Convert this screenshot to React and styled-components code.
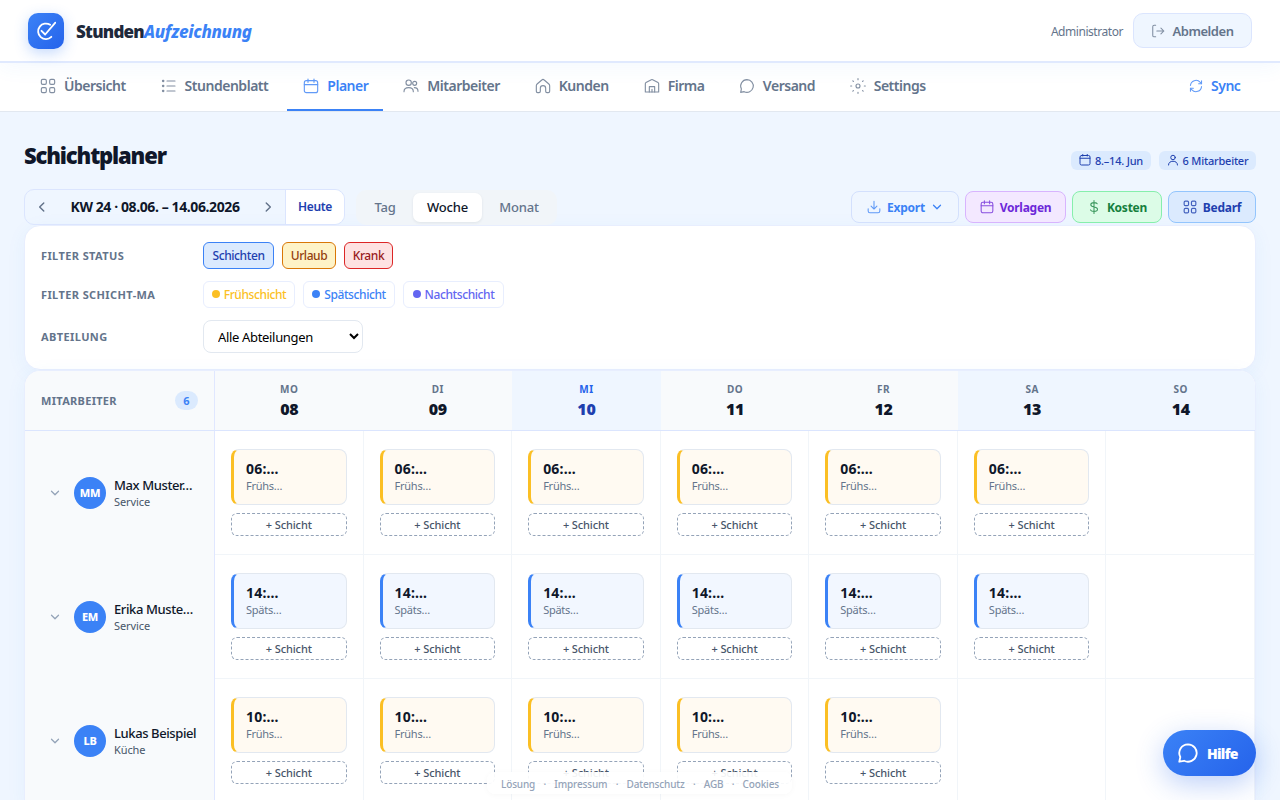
import styled, { createGlobalStyle, css } from 'styled-components';
import { useState } from 'react';

const days = [
  { name: 'MO', date: '08' },
  { name: 'DI', date: '09' },
  { name: 'MI', date: '10', tone: 'today' },
  { name: 'DO', date: '11' },
  { name: 'FR', date: '12' },
  { name: 'SA', date: '13', tone: 'weekend' },
  { name: 'SO', date: '14', tone: 'weekend' },
];

const employees = [
  { initials: 'MM', name: 'Max Muster…', dept: 'Service', time: '06:…', shift: 'Frühs…', type: 'early', count: 6 },
  { initials: 'EM', name: 'Erika Muste…', dept: 'Service', time: '14:…', shift: 'Späts…', type: 'late', count: 6 },
  { initials: 'LB', name: 'Lukas Beispiel', dept: 'Küche', time: '10:…', shift: 'Frühs…', type: 'early', count: 5 },
];

const shiftColors = {
  early: { line: '#fbbf24', bg: '#fffaf2' },
  late: { line: '#3b82f6', bg: '#f2f7ff' },
};

const icons = {
  grid: (
    <>
      <rect x="2" y="2" width="7.5" height="7.5" rx="2" />
      <rect x="14.5" y="2" width="7.5" height="7.5" rx="2" />
      <rect x="2" y="14.5" width="7.5" height="7.5" rx="2" />
      <rect x="14.5" y="14.5" width="7.5" height="7.5" rx="2" />
    </>
  ),
  list: (
    <>
      <path d="M9 4.5h12M9 12h12M9 19.5h12" />
      <path d="M3 4.5h.5M3 12h.5M3 19.5h.5" strokeWidth="3.4" />
    </>
  ),
  calendar: (
    <>
      <rect x="2" y="4" width="20" height="18" rx="3" />
      <path d="M2 10h20M7.5 1.5v5M16.5 1.5v5" />
    </>
  ),
  calendarPlain: (
    <>
      <rect x="2" y="3" width="20" height="19" rx="3" />
      <path d="M2 8.5h20M7.5 1v3M16.5 1v3" />
    </>
  ),
  users: (
    <>
      <circle cx="8.5" cy="7" r="4" />
      <circle cx="17.5" cy="8" r="3" />
      <path d="M1.5 20.5c0-4 3-6 7-6s7 2 7 6M17 14.5c3 0 5.5 2 5.5 5.5" />
    </>
  ),
  home: (
    <path d="M2 11.5c0-1 .4-1.8 1.2-2.5l7-6c1-.9 2.6-.9 3.6 0l7 6c.8.7 1.2 1.5 1.2 2.5V20a2 2 0 0 1-2 2h-2a2 2 0 0 1-2-2v-4.5a4 4 0 0 0-8 0V20a2 2 0 0 1-2 2H4a2 2 0 0 1-2-2z" />
  ),
  building: (
    <>
      <path d="M2 21V8.5c0-.8.4-1.4 1-1.7l8-4.3c.6-.3 1.4-.3 2 0l8 4.3c.6.3 1 .9 1 1.7V21z" />
      <path d="M8 21v-8h8v8M12 17v4" />
    </>
  ),
  chat: (
    <path d="M12 2.5a9.5 9.5 0 1 1-4.3 18L2.5 21.5l1.1-5.1A9.5 9.5 0 0 1 12 2.5z" />
  ),
  gear: (
    <>
      <circle cx="12" cy="12" r="3" />
      <path d="M12 1v1.5M12 21.5V23M1 12h1.5M21.5 12H23M4.2 4.2l1 1M18.8 18.8l1 1M4.2 19.8l1-1M18.8 5.2l1-1" />
    </>
  ),
  sync: (
    <>
      <path d="M2.5 11a9.5 9.5 0 0 1 16.5-5.5L21.5 8M21.5 13a9.5 9.5 0 0 1-16.5 5.5L2.5 16" />
      <path d="M21.5 3v5h-5M2.5 21v-5h5" />
    </>
  ),
  logout: (
    <>
      <path d="M8 22H5.5A2.5 2.5 0 0 1 3 19.5v-15A2.5 2.5 0 0 1 5.5 2H8" />
      <path d="M10 12H22M17 7l5 5-5 5" />
    </>
  ),
  user: (
    <>
      <circle cx="12" cy="7" r="4.5" />
      <path d="M3 22c0-5 4-7.5 9-7.5s9 2.5 9 7.5" />
    </>
  ),
  download: (
    <>
      <path d="M2 15v4a3 3 0 0 0 3 3h14a3 3 0 0 0 3-3v-4" />
      <path d="M12 2v13M7 10.5l5 5 5-5" />
    </>
  ),
  dollar: (
    <path d="M12 1v22M17.5 6.5C16.5 5 14.5 4.5 12 4.5c-3 0-5.5 1.2-5.5 3.7 0 5.3 11.5 2.3 11.5 7.5 0 2.6-2.7 3.8-6 3.8-2.8 0-5-.7-6-2.5" />
  ),
  down: <path d="M5 8.5l7 7 7-7" />,
  left: <path d="M15 5l-7 7 7 7" />,
  right: <path d="M9 5l7 7-7 7" />,
  logo: (
    <>
      <path d="M17 4.6A9.3 9.3 0 1 0 18.4 19" />
      <path d="M6.6 11.8l4.4 4.4L23.2 2" />
    </>
  ),
};

const Icon = ({ name, size = 16, stroke = 1.5, faded }) => (
  <Svg
    width={size}
    height={size}
    viewBox="0 0 24 24"
    strokeWidth={stroke}
    $faded={faded}
  >
    {icons[name]}
  </Svg>
);

const tabs = [
  { icon: 'grid', label: 'Übersicht', width: 60.6 },
  { icon: 'list', label: 'Stundenblatt', width: 82.7 },
  { icon: 'calendar', label: 'Planer', width: 40 },
  { icon: 'users', label: 'Mitarbeiter', width: 71.4 },
  { icon: 'home', label: 'Kunden', width: 49 },
  { icon: 'building', label: 'Firma', width: 35.2 },
  { icon: 'chat', label: 'Versand', width: 50.8 },
  { icon: 'gear', label: 'Settings', width: 52 },
];

const App = () => {
  const [activeTab, setActiveTab] = useState('Planer');
  const [view, setView] = useState('Woche');

  return (
    <Page>
      <GlobalStyle />
      <Header>
        <Brand>
          <Logo>
            <Icon name="logo" size={20} stroke={2.2} />
          </Logo>
          <BrandName>
            Stunden<em>Aufzeichnung</em>
          </BrandName>
        </Brand>
        <Account>
          <Role>Administrator</Role>
          <LogoutBtn>
            <Icon name="logout" size={14} stroke={1.8} faded />
            Abmelden
          </LogoutBtn>
        </Account>
      </Header>

      <Nav>
        {tabs.map((tab) => (
          <Tab
            key={tab.label}
            $active={tab.label === activeTab}
            onClick={() => setActiveTab(tab.label)}
          >
            <Icon name={tab.icon} stroke={1.7} faded />
            <TabLabel $width={tab.width}>{tab.label}</TabLabel>
          </Tab>
        ))}
        <SyncTab>
          <Icon name="sync" size={14} stroke={1.8} faded />
          <TabLabel $width={29}>Sync</TabLabel>
        </SyncTab>
      </Nav>

      <Main>
        <TitleRow>
          <Title>Schichtplaner</Title>
          <Badges>
            <Badge $width={80}>
              <Icon name="calendarPlain" size={12} stroke={2} />
              8.–14. Jun
            </Badge>
            <Badge $width={97}>
              <Icon name="user" size={12} stroke={2} />6 Mitarbeiter
            </Badge>
          </Badges>
        </TitleRow>

        <Toolbar>
          <DateNav>
            <ArrowBtn>
              <Icon name="left" size={14} stroke={2.5} />
            </ArrowBtn>
            <Period>KW 24 · 08.06. – 14.06.2026</Period>
            <ArrowBtn>
              <Icon name="right" size={14} stroke={2.5} />
            </ArrowBtn>
            <TodayBtn>Heute</TodayBtn>
          </DateNav>
          <Views>
            {[['Tag', 52], ['Woche', 69], ['Monat', 70]].map(([label, width]) => (
              <ViewBtn
                key={label}
                $width={width}
                $active={label === view}
                onClick={() => setView(label)}
              >
                {label}
              </ViewBtn>
            ))}
          </Views>
          <Actions>
            <ActionBtn $width={108} $tone="plain">
              <Icon name="download" size={14} stroke={1.8} faded />
              Export
              <Icon name="down" size={12} stroke={2.5} />
            </ActionBtn>
            <ActionBtn $width={101} $tone="purple">
              <Icon name="calendar" size={14} stroke={1.8} faded />
              Vorlagen
            </ActionBtn>
            <ActionBtn $width={90} $tone="green">
              <Icon name="dollar" size={14} stroke={1.8} faded />
              Kosten
            </ActionBtn>
            <ActionBtn $width={88} $tone="blue">
              <Icon name="grid" size={14} stroke={2} faded />
              Bedarf
            </ActionBtn>
          </Actions>
        </Toolbar>

        <Filters>
          <FilterRow>
            <FilterLabel>FILTER STATUS</FilterLabel>
            <StatusChip $width={71} $bg="#dbeafe" $line="#3b82f6" $color="#1e40af">
              Schichten
            </StatusChip>
            <StatusChip $width={54} $bg="#fef3c7" $line="#d97706" $color="#92400e">
              Urlaub
            </StatusChip>
            <StatusChip $width={49} $bg="#fee2e2" $line="#dc2626" $color="#991b1b">
              Krank
            </StatusChip>
          </FilterRow>
          <FilterRow>
            <FilterLabel>FILTER SCHICHT-MA</FilterLabel>
            <ShiftChip $width={92} $color="#fbbf24">
              <Dot />
              Frühschicht
            </ShiftChip>
            <ShiftChip $width={92} $color="#3b82f6">
              <Dot />
              Spätschicht
            </ShiftChip>
            <ShiftChip $width={101} $color="#6366f1">
              <Dot />
              Nachtschicht
            </ShiftChip>
          </FilterRow>
          <FilterRow>
            <FilterLabel>ABTEILUNG</FilterLabel>
            <Select>
              <option>Alle Abteilungen</option>
            </Select>
          </FilterRow>
        </Filters>

        <Plan>
          <PlanHead>
            <CornerCell>
              MITARBEITER
              <Count>6</Count>
            </CornerCell>
            {days.map((day) => (
              <DayHead key={day.name} $tone={day.tone}>
                <DayName>{day.name}</DayName>
                <DayDate>{day.date}</DayDate>
              </DayHead>
            ))}
          </PlanHead>
          {employees.map((person) => (
            <PlanRow key={person.initials}>
              <PersonCell>
                <Icon name="down" size={12} stroke={2.5} />
                <Avatar>{person.initials}</Avatar>
                <PersonText>
                  <PersonName>{person.name}</PersonName>
                  <PersonDept>{person.dept}</PersonDept>
                </PersonText>
              </PersonCell>
              {days.map((day, index) => (
                <DayCell key={day.name}>
                  {index < person.count && (
                    <>
                      <Shift $type={person.type}>
                        <ShiftTime>{person.time}</ShiftTime>
                        <ShiftName>{person.shift}</ShiftName>
                      </Shift>
                      <AddBtn>+ Schicht</AddBtn>
                    </>
                  )}
                </DayCell>
              ))}
            </PlanRow>
          ))}
        </Plan>
      </Main>

      <Legal>
        <span>Lösung</span>
        <i>·</i>
        <span>Impressum</span>
        <i>·</i>
        <span>Datenschutz</span>
        <i>·</i>
        <span>AGB</span>
        <i>·</i>
        <span>Cookies</span>
      </Legal>
      <HelpBtn>
        <Icon name="chat" size={22} stroke={2} />
        Hilfe
      </HelpBtn>
    </Page>
  );
};

export default App;

const GlobalStyle = createGlobalStyle`
  * {
    box-sizing: border-box;
  }
  body {
    margin: 0;
    background: #eff6ff;
    font-family: 'Noto Sans', 'Open Sans', sans-serif;
    color: #0f172a;
  }
  button, select {
    font-family: inherit;
    margin: 0;
    cursor: pointer;
    white-space: nowrap;
  }
`;

const Page = styled.div`
  height: 800px;
  overflow: hidden;
`;

const Svg = styled.svg`
  flex: none;
  fill: none;
  stroke: currentColor;
  stroke-linecap: round;
  stroke-linejoin: round;
  opacity: ${({ $faded }) => ($faded ? 0.8 : 1)};
`;

const Header = styled.header`
  display: flex;
  align-items: center;
  justify-content: space-between;
  position: relative;
  z-index: 1;
  height: 63px;
  padding: 0 28px;
  background: #fff;
  border-bottom: 2px solid #e0e9fe;
  box-shadow: 0 4px 20px rgba(59, 130, 246, 0.06);
`;

const Brand = styled.div`
  display: flex;
  align-items: center;
  gap: 12px;
`;

const Logo = styled.div`
  display: flex;
  align-items: center;
  justify-content: center;
  width: 36px;
  height: 36px;
  border-radius: 10px;
  color: #fff;
  background: linear-gradient(135deg, #3b82f6, #2563eb);
  box-shadow: 0 4px 14px rgba(59, 130, 246, 0.3);
`;

const BrandName = styled.div`
  padding-top: 1px;
  font-size: 17px;
  font-weight: 900;
  letter-spacing: -0.75px;
  color: #1e293b;
  em {
    color: #3b82f6;
    font-weight: 800;
    letter-spacing: -0.3px;
  }
`;

const Account = styled.div`
  display: flex;
  align-items: center;
  gap: 10px;
`;

const Role = styled.span`
  padding-top: 1px;
  font-size: 12px;
  letter-spacing: -0.45px;
  color: #64748b;
`;

const LogoutBtn = styled.button`
  display: flex;
  align-items: center;
  justify-content: center;
  gap: 7px;
  width: 119px;
  height: 35px;
  padding: 0;
  border: 1px solid #dbe5fe;
  border-radius: 10px;
  background: #eff6ff;
  color: #64748b;
  font-size: 13px;
  font-weight: 600;
  letter-spacing: -0.45px;
`;

const Nav = styled.nav`
  display: flex;
  gap: 4px;
  height: 49px;
  padding: 0 24px;
  background: #fff;
  border-bottom: 1px solid #e2e8f0;
`;

const Tab = styled.div`
  display: flex;
  align-items: center;
  gap: 8px;
  padding: 0 16px;
  border-bottom: 2px solid ${({ $active }) => ($active ? '#3b82f6' : 'transparent')};
  color: ${({ $active }) => ($active ? '#3b82f6' : '#64748b')};
  cursor: pointer;
`;

const TabLabel = styled.span`
  width: ${({ $width }) => $width}px;
  padding-bottom: 1px;
  font-size: 14px;
  font-weight: 580;
  letter-spacing: -0.48px;
  white-space: nowrap;
`;

const SyncTab = styled(Tab)`
  margin-left: auto;
  color: #3b82f6;
`;

const Main = styled.main`
  padding: 28px 24px 0;
`;

const TitleRow = styled.div`
  display: flex;
  align-items: flex-start;
  justify-content: space-between;
  height: 33px;
`;

const Title = styled.h1`
  margin: 0;
  font-size: 22px;
  font-weight: 900;
  line-height: 31px;
  letter-spacing: -1.15px;
`;

const Badges = styled.div`
  display: flex;
  gap: 8px;
  padding-top: 11px;
`;

const Badge = styled.div`
  display: flex;
  align-items: center;
  justify-content: center;
  gap: 4px;
  width: ${({ $width }) => $width}px;
  height: 19px;
  border-radius: 6px;
  background: #dbeafe;
  color: #1e40af;
  font-size: 11px;
  font-weight: 500;
  letter-spacing: -0.22px;
  white-space: nowrap;
  svg {
    margin-top: -2px;
  }
`;

const Toolbar = styled.div`
  display: flex;
  align-items: center;
  height: 36px;
  margin-top: 16px;
`;

const DateNav = styled.div`
  display: flex;
  width: 321px;
  height: 36px;
  border: 1px solid #dbe5fe;
  border-radius: 10px;
  overflow: hidden;
`;

const ArrowBtn = styled.button`
  display: flex;
  align-items: center;
  justify-content: center;
  width: 34px;
  padding: 0;
  border: none;
  background: none;
  color: #64748b;
`;

const Period = styled.div`
  display: flex;
  align-items: center;
  justify-content: center;
  width: 192px;
  padding-bottom: 1px;
  font-size: 14px;
  font-weight: 700;
  letter-spacing: -0.4px;
  white-space: nowrap;
`;

const TodayBtn = styled.button`
  flex: 1;
  padding: 0 0 1px;
  border: none;
  border-left: 1px solid #dbe5fe;
  background: #fff;
  color: #1e40af;
  font-size: 12px;
  font-weight: 600;
  letter-spacing: -0.3px;
`;

const Views = styled.div`
  display: flex;
  gap: 2px;
  height: 35px;
  margin-left: 11px;
  padding: 3px;
  border-radius: 10px;
  background: #f1f5f9;
`;

const ViewBtn = styled.button`
  width: ${({ $width }) => $width}px;
  padding: 0;
  border: none;
  border-radius: 7px;
  background: none;
  color: #64748b;
  font-size: 13px;
  font-weight: 500;
  letter-spacing: -0.2px;
  ${({ $active }) =>
    $active &&
    css`
      background: #fff;
      color: #0f172a;
      box-shadow: 0 1px 3px rgba(15, 23, 42, 0.08);
    `}
`;

const Actions = styled.div`
  display: flex;
  gap: 6px;
  margin-left: auto;
`;

const tones = {
  plain: css`
    border-color: #d3e0fd;
    background: #eff6ff;
    color: #3b82f6;
  `,
  purple: css`
    border-color: #d8b4fe;
    background: #f3e8ff;
    color: #6d28d9;
  `,
  green: css`
    border-color: #86efac;
    background: #dcfce7;
    color: #15803d;
  `,
  blue: css`
    border-color: #93c5fd;
    background: #dbeafe;
    color: #1e40af;
  `,
};

const ActionBtn = styled.button`
  display: flex;
  align-items: center;
  justify-content: center;
  gap: 6px;
  width: ${({ $width }) => $width}px;
  height: 32px;
  padding: 0;
  border: 1px solid;
  border-radius: 8px;
  font-size: 12px;
  font-weight: 700;
  letter-spacing: -0.25px;
  ${({ $tone }) => tones[$tone]}
`;

const Filters = styled.section`
  display: flex;
  flex-direction: column;
  gap: 12px;
  height: 145px;
  padding: 16px;
  border: 1px solid #e8eefe;
  border-radius: 16px;
  background: #fff;
  box-shadow: 0 4px 20px rgba(59, 130, 246, 0.06);
`;

const FilterRow = styled.div`
  display: flex;
  align-items: center;
  gap: 8px;
`;

const FilterLabel = styled.div`
  width: 154px;
  color: #64748b;
  font-size: 11px;
  font-weight: 700;
  letter-spacing: 0.4px;
`;

const Chip = styled.button`
  display: flex;
  align-items: center;
  justify-content: center;
  width: ${({ $width }) => $width}px;
  height: 27px;
  padding: 0;
  border-radius: 6px;
  font-size: 12px;
  font-weight: 530;
  letter-spacing: -0.4px;
  color: ${({ $color }) => $color};
`;

const StatusChip = styled(Chip)`
  border: 1px solid ${({ $line }) => $line};
  background: ${({ $bg }) => $bg};
`;

const ShiftChip = styled(Chip)`
  gap: 4px;
  border: 1px solid #e8eefe;
  background: #fff;
`;

const Dot = styled.span`
  width: 8px;
  height: 8px;
  margin-top: -1px;
  border-radius: 50%;
  background: currentColor;
`;

const Select = styled.select`
  width: 160px;
  height: 33px;
  padding: 0 10px;
  border: 1px solid #e2e8f0;
  border-radius: 8px;
  background: #fff;
  color: #000;
  font-size: 13px;
  letter-spacing: -0.33px;
`;

const Plan = styled.section`
  border: 1px solid #e8eefe;
  border-radius: 16px 16px 0 0;
  background: #fff;
  box-shadow: 0 4px 20px rgba(59, 130, 246, 0.06);
  overflow: hidden;
`;

const PlanRow = styled.div`
  display: grid;
  grid-template-columns: 190px repeat(7, minmax(0, 1fr));
  height: 124px;
`;

const PlanHead = styled(PlanRow)`
  height: 60px;
  border-bottom: 1px solid #dbe5fe;
  background: #f8fafc;
`;

const CornerCell = styled.div`
  display: flex;
  align-items: center;
  justify-content: space-between;
  padding: 0 16px;
  border-right: 1px solid #e0e7ff;
  color: #64748b;
  font-size: 11px;
  font-weight: 700;
  letter-spacing: 0.3px;
`;

const Count = styled.span`
  width: 23px;
  border-radius: 10px;
  background: #dbeafe;
  color: #3b82f6;
  line-height: 19px;
  text-align: center;
`;

const DayHead = styled.div`
  display: flex;
  flex-direction: column;
  align-items: center;
  padding-top: 11px;
  background: ${({ $tone }) => ($tone ? '#eff6ff' : 'none')};
  color: ${({ $tone }) => ($tone === 'today' ? '#1e40af' : '#0f172a')};
  span {
    color: ${({ $tone }) => ($tone === 'today' ? '#2563eb' : '#64748b')};
  }
`;

const DayName = styled.span`
  font-size: 10px;
  font-weight: 700;
  line-height: 15px;
  letter-spacing: 0.5px;
`;

const DayDate = styled.div`
  margin-top: 1px;
  font-size: 16px;
  font-weight: 900;
  line-height: 22px;
  letter-spacing: -0.3px;
`;

const PersonCell = styled.div`
  display: flex;
  align-items: center;
  padding-left: 24px;
  border-right: 1px solid #e0e7ff;
  background: #f8fafc;
  color: #94a3b8;
`;

const Avatar = styled.div`
  display: flex;
  align-items: center;
  justify-content: center;
  flex: none;
  width: 32px;
  height: 32px;
  margin: 0 8px 0 13px;
  padding-bottom: 1px;
  border-radius: 50%;
  background: #3b82f6;
  color: #fff;
  font-size: 11px;
  font-weight: 800;
  letter-spacing: -0.2px;
`;

const PersonText = styled.div`
  white-space: nowrap;
`;

const PersonName = styled.div`
  color: #0f172a;
  font-size: 13px;
  font-weight: 530;
  line-height: 17px;
  letter-spacing: -0.4px;
`;

const PersonDept = styled.div`
  color: #475569;
  font-size: 11px;
  line-height: 16px;
  letter-spacing: -0.1px;
`;

const DayCell = styled.div`
  padding: 18px 16px;
  border-right: 1px solid #f1f5f9;
  border-bottom: 1px solid #f1f5f9;
`;

const Shift = styled.div`
  height: 56px;
  padding: 10px 12px;
  border: 1px solid #e2e8f0;
  border-left: 3px solid ${({ $type }) => shiftColors[$type].line};
  border-radius: 8px;
  background: ${({ $type }) => shiftColors[$type].bg};
`;

const ShiftTime = styled.div`
  font-size: 14px;
  font-weight: 700;
  line-height: 18px;
  letter-spacing: 0.2px;
`;

const ShiftName = styled.div`
  color: #64748b;
  font-size: 11px;
  line-height: 16px;
  letter-spacing: -0.25px;
`;

const AddBtn = styled.button`
  width: 100%;
  height: 23px;
  margin-top: 8px;
  padding: 0;
  border: 1px dashed #94a3b8;
  border-radius: 6px;
  background: #fff;
  color: #475569;
  font-size: 11px;
  font-weight: 500;
  letter-spacing: -0.1px;
`;

const Legal = styled.footer`
  display: flex;
  justify-content: space-between;
  position: absolute;
  top: 772px;
  left: 487px;
  width: 305px;
  height: 22px;
  padding: 0 13px 0 14px;
  border-radius: 8px;
  background: rgba(255, 255, 255, 0.92);
  box-shadow: 0 1px 6px rgba(15, 23, 42, 0.03);
  color: #94a3b8;
  font-size: 10px;
  font-weight: 500;
  line-height: 24px;
  letter-spacing: -0.15px;
  i {
    font-style: normal;
  }
`;

const HelpBtn = styled.button`
  display: flex;
  align-items: center;
  gap: 8px;
  position: absolute;
  top: 730px;
  left: 1163px;
  width: 93px;
  height: 46px;
  padding: 0 0 0 14px;
  border: none;
  border-radius: 23px;
  background: linear-gradient(135deg, #3b82f6, #2563eb);
  box-shadow: 0 8px 28px rgba(37, 99, 235, 0.3);
  color: #fff;
  font-size: 14px;
  font-weight: 900;
  letter-spacing: -0.7px;
`;
